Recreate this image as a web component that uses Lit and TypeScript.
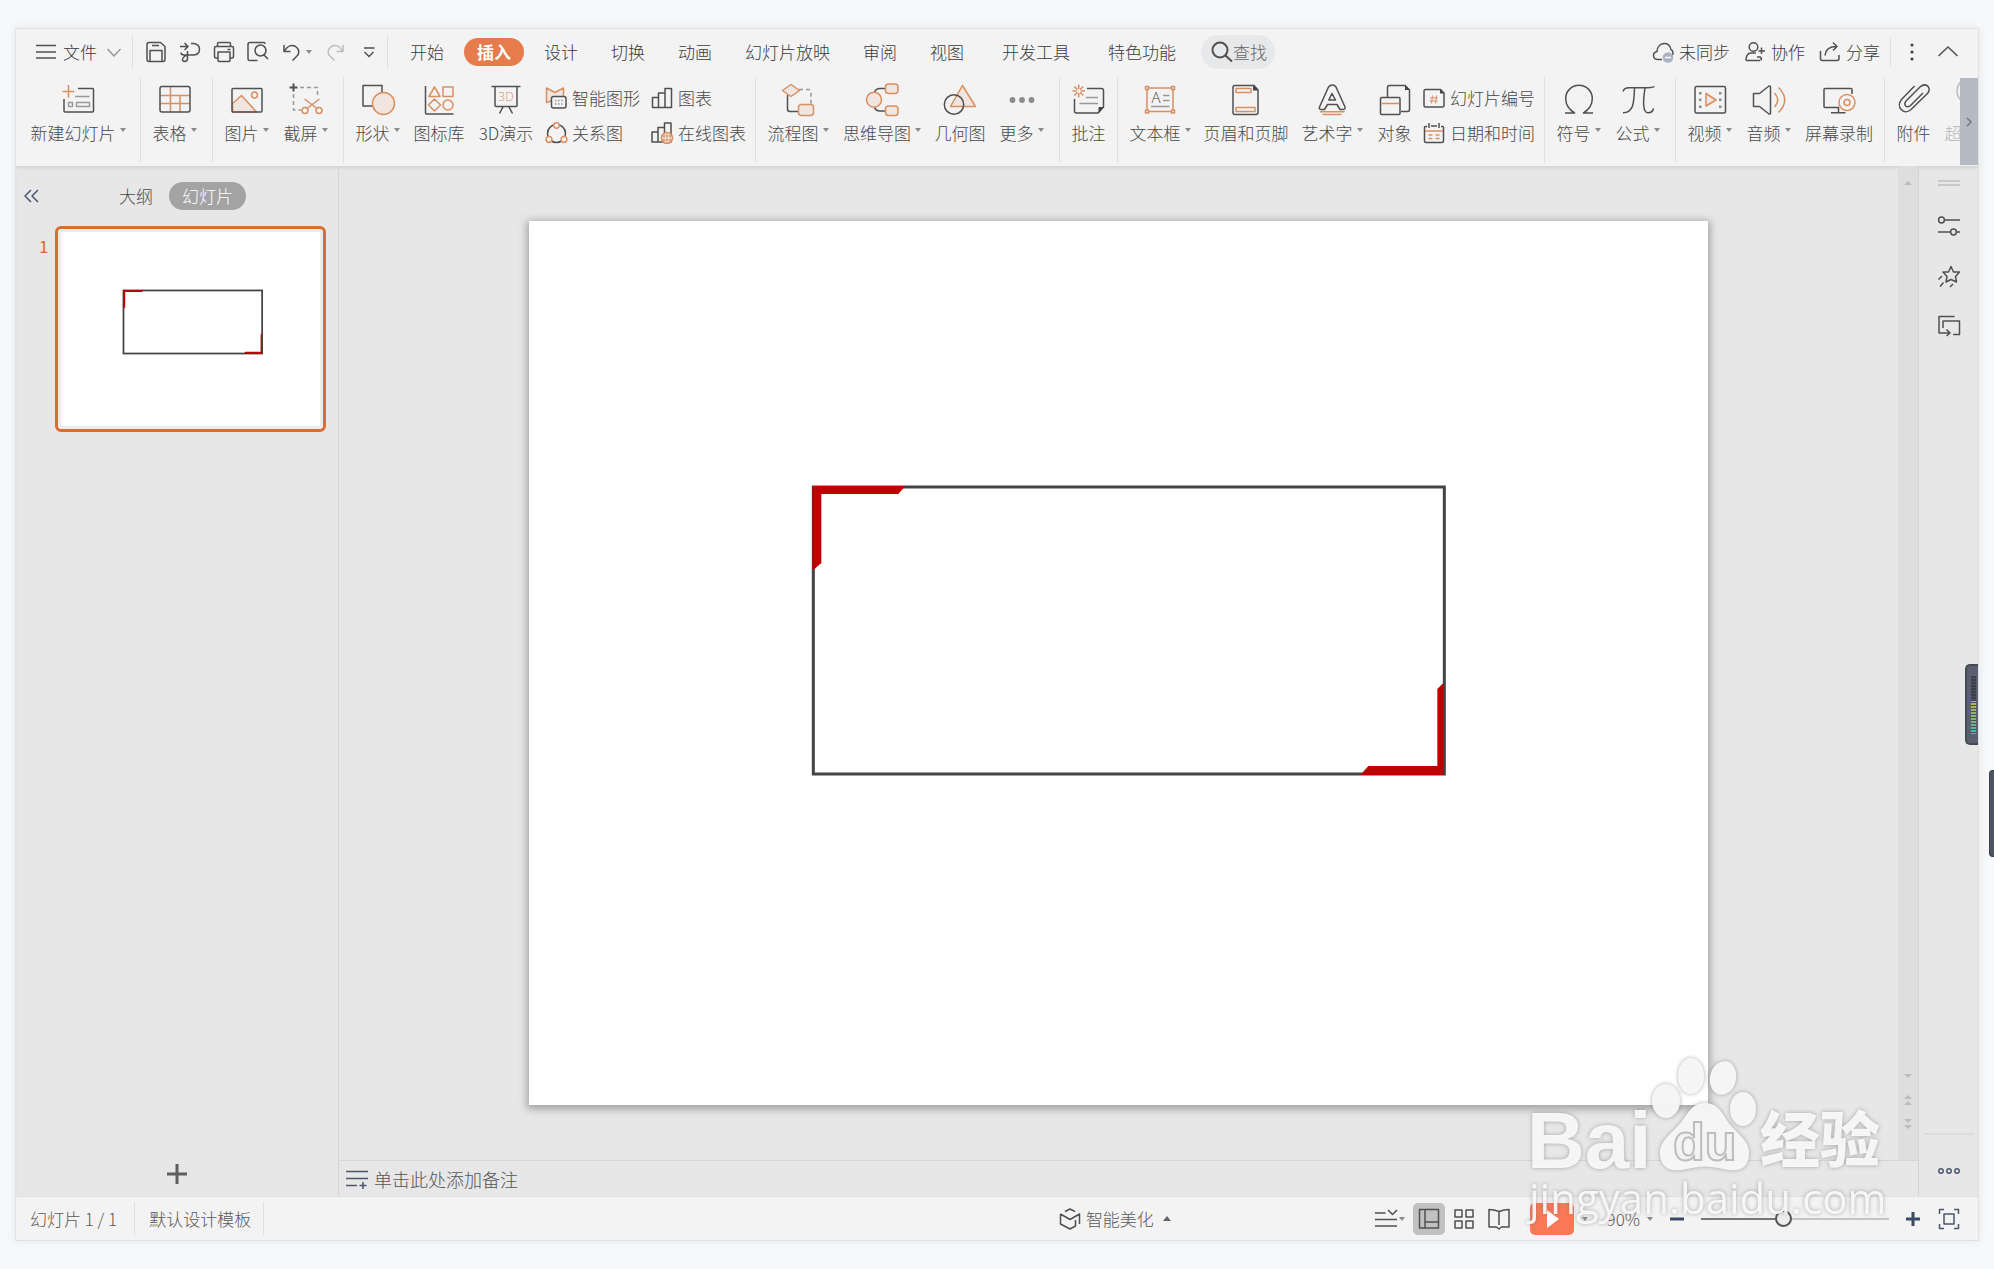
import { LitElement, html, svg, css, type TemplateResult, type SVGTemplateResult } from "lit";
import { customElement, property } from "lit/decorators.js";

/* ---------- icon artwork ---------- */

const big: Record<string, SVGTemplateResult> = {
  newSlide: svg`<path class="d" d="M17 5.5H31.5Q32.5 5.5 32.5 6.5V28Q32.5 29 31.5 29H4Q3 29 3 28V16"/><path class="o" d="M7.5 2V14.5M1.5 8.5H13.5"/><path class="g" d="M14 13.5H28.5M7.5 19.5H11.5V23.5H7.5ZM15.5 19.5H28.5V23.5H15.5Z"/>`,
  table: svg`<path class="o" d="M12.5 4V29M22 12.5V29M2.5 12.5H31.5M2.5 20.5H31.5"/><rect class="d" x="2" y="3.5" width="30" height="25.5" rx="2"/>`,
  image: svg`<path class="of" d="M2.5 20.5L11.5 12.5L26.5 29H2.5Z"/><circle class="o" cx="24.5" cy="12" r="3"/><rect class="d" x="2" y="5.5" width="30" height="23.5" rx="1"/>`,
  capture: svg`<path class="d b" d="M4.5 .5V8.5M.5 4.5H8.5"/><path class="g" stroke-dasharray="4 3" d="M11 4.5H28.5V15M4.5 11V27H12"/><circle class="o" cx="16" cy="27.5" r="3"/><circle class="o" cx="30" cy="27.5" r="3"/><path class="o" d="M15.5 16L28 25.5M30.5 16L18 25.5"/>`,
  shape: svg`<rect class="d" x="2" y="2.5" width="19" height="20.5"/><circle class="of" cx="22.5" cy="20.5" r="11"/>`,
  library: svg`<path class="d" d="M3.5 3V30Q3.5 31 4.5 31H31.5"/><path class="o" d="M12.5 4L7 13.5H18ZM21 4H31V13.5H21ZM12.5 16L18.5 22L12.5 28L6.5 22Z"/><circle class="o" cx="26" cy="22" r="5"/>`,
  show3d: svg`<path class="d" d="M2.5 3.5H31.5M6 3.5V22.5Q6 23.5 7 23.5H27Q28 23.5 28 22.5V3.5M14 24L10.500 30.500M20 24L23.500 30.500"/><text class="ot" x="17" y="18" text-anchor="middle" font-size="12">3D</text>`,
  flow: svg`<path class="d" d="M6.500 12V26Q6.500 28.500 9 28.500H17"/><path class="g" stroke-dasharray="4 3" d="M18 6.500H28Q30 6.500 30 8.500V21"/><path class="of" d="M10 1.500L18.500 7.500L10 13.500L1.500 7.500Z"/><rect class="of" x="17.500" y="21.500" width="15" height="11" rx="3"/>`,
  mind: svg`<path class="d" d="M9.500 9.500Q10.500 5.500 15 5.500H21M9.500 24Q10.500 28 15 28H21"/><circle class="of" cx="9" cy="16.700" r="7.500"/><rect class="of" x="20.500" y="1" width="12.500" height="9.500" rx="3"/><rect class="of" x="20.500" y="23" width="12.500" height="9.500" rx="3"/>`,
  geo: svg`<path class="of" d="M19.500 2.500L7.500 23.500H32.500Z"/><circle class="d" cx="11" cy="21.500" r="9.700"/>`,
  more: svg`<circle class="gd" cx="7.500" cy="17" r="2.900"/><circle class="gd" cx="17" cy="17" r="2.900"/><circle class="gd" cx="26.500" cy="17" r="2.900"/>`,
  note: svg`<path class="d" d="M15 5.500H29.500Q31.500 5.500 31.500 7.500V24L26 30H4.500Q2.500 30 2.500 28V16"/><path class="k" d="M32 24H27.500Q26.500 24 26.500 25V30.500Z"/><path class="o" d="M6.700 1.500V6M6.700 10V14.500M.5 8H4.700M8.700 8H13M2.300 3.500L5.500 6.700M8 9.300L11.200 12.500M11.200 3.500L8 6.700M5.500 9.300L2.300 12.500"/><path class="g" d="M14 14.500H26M7.500 20.500H26"/>`,
  textbox: svg`<rect class="o" x="4" y="5" width="26" height="23.500"/><path class="ow" d="M2.500 3.500H5.500V6.500H2.500ZM28.500 3.500H31.500V6.500H28.500ZM2.500 27H5.500V30H2.500ZM28.500 27H31.500V30H28.500Z"/><text class="dt" x="13" y="20" text-anchor="middle" font-size="15">A</text><path class="g" d="M20 12.500H26.500M20 17.500H26.500M8 23.500H26.500"/>`,
  header: svg`<path class="d" d="M25 2.500H6Q4 2.500 4 4.500V29.500Q4 31.500 6 31.500H27Q29 31.500 29 29.500V7Z"/><path class="k" d="M24 2L29.500 7.500H24Z"/><rect class="o" x="7" y="5.500" width="15" height="4"/><rect class="o" x="7" y="24.500" width="19" height="4"/>`,
  art: svg`<path class="d" d="M13.500 4Q15 2 17.500 2H17.500Q19.500 2 21 4L30 24Q30.500 26.500 28 26.500H25L22 21.500H12.500L9.500 26.500H6.500Q3.500 26.500 4.500 24ZM17 10.500L13.800 17H20.500Z"/><path class="o" d="M5 28.700H29.500M7.500 31.500H26.500"/>`,
  object: svg`<path class="d" d="M9.500 14V4.500Q9.500 2.500 11.500 2.500H27L31.500 7V26.500Q31.500 28.500 29.500 28.500H23"/><path class="k" d="M27 2L32 7H27Z"/><rect class="d" x="2.500" y="14.500" width="19.500" height="17" rx="1"/><path class="o" d="M3.500 20.500H21"/>`,
  omega: svg`<path class="d" d="M3 30H12.500C7 26.500 3.700 22 3.700 15.500A13.300 13.300 0 0 1 30.300 15.500C30.300 22 27 26.500 21.500 30H31"/>`,
  pi: svg`<path class="d" d="M2 8.500C3 5.500 5 4.800 8 4.800H27C30 4.800 32 4.600 33.500 3.500M13.500 5C13 20 12.500 29.500 2 29.800M24 5C22 18 21.500 29.800 27 29.800C30 29.800 32 28 32.500 25.500"/>`,
  video: svg`<rect class="d" x="2" y="3.500" width="30.500" height="26.500" rx="1.500"/><path class="of" d="M13 10.500L23 17L13 23Z"/><path class="gd" d="M6 9H8.500V11.500H6ZM6 15.500H8.500V18H6ZM6 22.500H8.500V25H6ZM26 9H28.500V11.500H26ZM26 15.500H28.500V18H26ZM26 22.500H28.500V25H26Z"/>`,
  audio: svg`<path class="d" d="M1.500 10.500H7.500L17 3Q18.500 2.500 18.500 4V30Q18.500 31.500 17 31L7.500 23.500H1.500Z"/><path class="o" d="M22.500 10Q29 17 22.500 24M26.500 4.500Q39 17 26.500 29.500"/>`,
  record: svg`<path class="d" d="M30 11V6.500Q30 5.500 29 5.500H3Q2 5.500 2 6.500V23.500Q2 24.500 3 24.500H17M9 29.700H23.500M16.500 24.500V29.500"/><circle class="ow" cx="25" cy="19.500" r="8"/><circle class="o" cx="25" cy="19.500" r="3"/>`,
  clip: svg`<path class="d" d="M17.500 3L4.500 16.500C-1.500 23.500 6.500 33 14 26.500L30.500 10.500C35.500 4.500 28.500 -1 23 4L9.500 17.500C5.500 22 10 26 13.500 22.500L26 10"/>`,
  link: svg`<circle class="f" cx="17" cy="8" r="13"/>`,
};

const small: Record<string, SVGTemplateResult> = {
  smart: svg`<path class="of" d="M1.500 1L10 5.500L18.500 1V14H6L1.500 15.500Z"/><rect class="dw" x="6.500" y="9.500" width="14.500" height="11.500" rx="2"/><path class="g" stroke-dasharray="1.500 1.500" d="M10 13.500H17.500M10 17H17.500"/>`,
  relation: svg`<circle class="d" cx="11.500" cy="11.500" r="9"/><circle class="ow" cx="11.500" cy="3.500" r="2.700"/><circle class="ow" cx="4" cy="17.500" r="2.900"/><circle class="ow" cx="19" cy="17.500" r="2.900"/>`,
  chart: svg`<path class="d" d="M1.500 20.500V10.500H7.500V20.500ZM7.500 20.500V6H14V20.500ZM14 20.500V1.500H20.500V20.500Z"/>`,
  online: svg`<path class="d" d="M1 20V10H7V20ZM7 20V5.500H13.500V20ZM13.500 20V1H20V20Z"/><circle class="ow" cx="16" cy="16" r="5.500"/><path class="o thin" d="M16 10.500V21.500M10.500 14H21.500M10.500 18H21.500M13 11.500V20.500M19 11.500V20.500"/>`,
  slideNo: svg`<path class="d" d="M17.500 2.500H2.500Q1 2.500 1 4V18.500Q1 20 2.500 20H19.500Q21 20 21 18.500V6Z"/><path class="k" d="M17 2L21.500 6.500H17Z"/><path class="o thin" d="M9.500 8.500L8.500 16.500M13.500 8.500L12.500 16.500M7 11H15M6.500 14H14.500"/>`,
  date: svg`<path class="d" d="M4 4.500H2.500Q1.500 4.500 1.500 5.500V19Q1.500 20.500 3 20.500H19Q20.500 20.500 20.500 19V5.500Q20.500 4.500 19.500 4.500H18M8 4H14M6 1V6M16 1V6"/><path class="o" d="M2 9H20M5.500 13H9.500M12.500 13H16.500M5.500 16.500H9.500M12.500 16.500H16.500"/>`,
  menu: svg`<path class="d" d="M1 4.500H21M1 11H21M1 17H21"/>`,
  save: svg`<path class="d" d="M2 3.500Q2 1.500 4 1.500H15.500L20 5.500V18.500Q20 20.500 18 20.500H4Q2 20.500 2 18.500ZM5 20V9.500H17V20M7 4.500H14"/>`,
  exportPdf: svg`<path class="d" d="M1 5.500H8.500M5.500 2L9 5.500L5.500 9M12 2.500H14.500Q20.500 3 20.500 8.500Q20.500 13.500 14.500 14H5Q2 14 2 11.500M8.500 10V17.500Q8.500 20.500 5.500 20.500Q2.500 20 4 17Q5 15 8.500 14"/>`,
  print: svg`<path class="d" d="M4.500 5V3Q4.500 1.500 6 1.500H16Q17.500 1.500 17.500 3V5M5 17H3Q1.500 17 1.500 15.500V7Q1.500 5.500 3 5.500H19Q20.500 5.500 20.500 7V15.500Q20.500 17 19 17H17M5 11H17V19.500Q17 20.500 16 20.500H6Q5 20.500 5 19.500ZM14.500 8.500H17.500"/>`,
  preview: svg`<path class="d" d="M10.500 19.500H3Q1 19.500 1 17.500V3.500Q1 1.500 3 1.500H17Q18 1.500 18 3M16.500 13.500L21 18"/><circle class="d" cx="13.500" cy="9.500" r="5.500"/>`,
  undo: svg`<path class="d" d="M3 4V10.500H9.500M3.500 10C6 5.500 10 3 14.500 5.500C19 8.500 18.500 13 15.500 15.500L11.500 19.500"/>`,
  redo: svg`<path class="f" d="M19 4V10.500H12.500M18.500 10C16 5.500 12 3 7.500 5.500C3 8.500 3.500 13 6.500 15.500L10.500 19.500"/>`,
  customize: svg`<path class="d" d="M6 7H16.500M6.500 11L11 15.500L15.500 11"/>`,
  search: svg`<circle class="d b" cx="9" cy="9" r="7.500"/><path class="d b" d="M14.500 14.500L21 20.500"/>`,
  cloud: svg`<path class="d" d="M10 18.500H5.500C.5 18 0 11.500 5 10.500C5.500 .5 18 0 19 8.500C21 9.500 21.500 12 20.500 14"/><circle cx="16" cy="16.500" r="5.300" fill="#a9b3c3"/><path d="M13 16.500H19" stroke="#fff" stroke-width="1.500"/>`,
  collab: svg`<circle class="d" cx="9.500" cy="6" r="4.300"/><path class="d" d="M16 19.500H3Q1.500 19.500 2 17.500Q3 12.500 6.500 12H12M13 16H16Q18 17 17 19.500M17.500 6.500V13M14.500 10H21"/>`,
  share: svg`<path class="d" d="M1.500 10V17.500Q1.500 19.500 3.500 19.500H18Q20 19.500 20 17.500V14M6 14.500C6.500 8 10 5.500 17.500 5.500M14 1.500L18 5.500L14 9.500"/>`,
  dots: svg`<circle class="k" cx="11" cy="4" r="1.600"/><circle class="k" cx="11" cy="11" r="1.600"/><circle class="k" cx="11" cy="18" r="1.600"/>`,
  up: svg`<path class="d" d="M1.500 15L11 6L20.500 15"/>`,
  down: svg`<path class="g" d="M4.500 8L11 15L17.500 8"/>`,
  collapse: svg`<path class="n" d="M9 5L3 11L9 17M16 5L10 11L16 17"/>`,
  plus: svg`<path class="gb" d="M11 1V21M1 11H21"/>`,
  notes: svg`<path class="n" d="M0 3.500H22M0 10.500H22M0 17.500H11M13.500 17.500H20.500M17 14V21"/>`,
  beautify: svg`<path class="d" d="M6 3.500L11 1L16 3.500M1.500 6V16L11 21L16.500 18V12M1.500 6L11 11.500L20.500 6V16"/>`,
  list: svg`<path class="d" d="M0 5H10.500M0 11.500H22M0 18H22M13 2L17.500 6.500L22 2"/>`,
  normal: svg`<path class="d" d="M1.500 1.500H20.500V20H1.500ZM7 1.500V20M7 14H20.500"/>`,
  grid: svg`<path class="d" d="M2 2H9V9H2ZM13 2H20V9H13ZM2 13H9V20H2ZM13 13H20V20H13Z"/>`,
  book: svg`<path class="d" d="M11 3.500Q6 1.500 1 1.500V19H8.500L11 21L13.500 19H21V1.500Q16 1.500 11 3.500V17"/>`,
  fit: svg`<path class="n" d="M1.500 6V1.500H6M16 1.500H20.500V6M20.500 16V20.500H16M6 20.500H1.500V16M6 6H16V16H6Z"/>`,
  minus: svg`<path class="nb" d="M4 11H18"/>`,
  add: svg`<path class="nb" d="M4 11H18M11 4V18"/>`,
  settings: svg`<path class="d" d="M7 5H22M0 17H12.500M18.500 17H22"/><circle class="d" cx="3.500" cy="5" r="2.900"/><circle class="d" cx="15.500" cy="17" r="2.900"/>`,
  star: svg`<path class="d" d="M13 1.500L15.500 7H21.500L17.500 11.500L18.500 17L13 14.500L8 17L9 11.500L5 7H10.500ZM4 11L.5 14.500M5.500 17.500L2 21.500M15 19L12 22"/>`,
  windows: svg`<path class="d" d="M16.500 1.500H1V18H11M8.500 14.500L12 18L8.500 21M5 13V6H21.500V19.500H15"/>`,
  ooo: svg`<circle class="n" cx="3" cy="11" r="2.200"/><circle class="n" cx="11" cy="11" r="2.200"/><circle class="n" cx="19" cy="11" r="2.200"/>`,
  play: svg`<path d="M6 2L18 11L6 20Z" fill="#fff"/>`,
};

const iconStyles = css`
  svg { display: block; flex: none; overflow: visible; }
  .d, .dw, .g, .o, .of, .ow, .f, .n, .nb, .gb { fill: none; stroke-width: 1.5; stroke-linejoin: round; }
  .d, .dw { stroke: #505050; }
  .dw, .ow { fill: #f3f3f3; }
  .b { stroke-width: 2; }
  .thin { stroke-width: 1; }
  .g { stroke: #999; }
  .gd { fill: #8c8c8c; }
  .gb { stroke: #5e5e5e; stroke-width: 3; }
  .k { fill: #444; }
  .o, .of, .ow { stroke: #d88f62; }
  .of { fill: #f1e6df; }
  .f { stroke: #bdbdbd; }
  .n { stroke: #4b566e; }
  .nb { stroke: #3c4963; stroke-width: 3; }
  .ot { fill: #d88f62; font-family: "Open Sans", sans-serif; }
  .dt { fill: #444; font-family: "Open Sans", sans-serif; }
`;

const ic = (name: string): TemplateResult =>
  html`<svg width="22" height="22" viewBox="0 0 22 22" aria-hidden="true">${small[name]}</svg>`;
const caret = html`<svg class="caret" width="6" height="4" viewBox="0 0 6 4" aria-hidden="true"><path d="M0 0H6L3 4Z" fill="#8a8a8a"/></svg>`;

const baseStyles = css`
  * { box-sizing: border-box; }
  button, input {
    margin: 0; padding: 0; border: 0; background: none; color: inherit;
    font: inherit; white-space: nowrap;
  }
`;

/* ---------- slide artwork, shared by canvas and thumbnail ---------- */

@customElement("slide-art")
export class SlideArt extends LitElement {
  @property({ type: Number }) line = 3;
  static styles = css`
    :host { display: block; background: #fff; aspect-ratio: 4 / 3; }
    svg { display: block; width: 100%; height: 100%; }
  `;
  render() {
    return html`<svg viewBox="0 0 1178 884" role="img" aria-label="1">
      <rect x="284" y="266" width="631" height="287" fill="none" stroke="#444" stroke-width=${this.line} />
      <path d="M283 265H376L369 273H292V342L284 349H283Z" fill="#c00000" />
      <path d="M914 462V554H831L839 545H908V468Z" fill="#c00000" />
    </svg>`;
  }
}

/* ---------- top bar ---------- */

@customElement("menu-bar")
export class MenuBar extends LitElement {
  static styles = [baseStyles, iconStyles, css`
    :host { display: flex; align-items: center; height: 48px; padding: 0 19px 2px 19px; color: #3a3a3a; }
    button { display: flex; align-items: center; }
    .file { gap: 6px; }
    .sep { flex: none; width: 1px; height: 32px; background: #dedede; margin: 0 12px 0 7px; }
    .sep.end { margin-right: 9px; }
    .quick { display: flex; align-items: center; gap: 12px; }
    .quick button { gap: 3px; }
    .tabs { display: flex; gap: 7px; }
    .tab { height: 28px; padding: 0 13px; border-radius: 14px; }
    .tab.wide { margin-left: 5px; }
    .tab.on { background: #e67c4b; color: #fff; font-weight: 700; }
    .search {
      display: flex; align-items: center; height: 34px; margin-left: 12px; padding: 0 6px 0 10px;
      border-radius: 17px; background: #e7e8ea;
    }
    .search input { width: 36px; outline: 0; }
    .search input::placeholder { color: #666; opacity: 1; }
    .right { display: flex; align-items: center; margin-left: auto; gap: 14px; }
    .right button { gap: 5px; }
    .right .sep { margin: 0 -4px; height: 28px; }
  `];
  private tabs: [string, boolean][] = [
    ["开始", false], ["插入", false], ["设计", false], ["切换", false], ["动画", false],
    ["幻灯片放映", false], ["审阅", false], ["视图", false], ["开发工具", true], ["特色功能", true],
  ];
  render() {
    return html`
      <button class="file">${ic("menu")}<span>文件</span>${ic("down")}</button>
      <span class="sep"></span>
      <div class="quick">
        <button aria-label="保存">${ic("save")}</button>
        <button aria-label="输出为PDF">${ic("exportPdf")}</button>
        <button aria-label="打印">${ic("print")}</button>
        <button aria-label="打印预览">${ic("preview")}</button>
        <button aria-label="撤销">${ic("undo")}${caret}</button>
        <button aria-label="恢复">${ic("redo")}</button>
        <button aria-label="自定义">${ic("customize")}</button>
      </div>
      <span class="sep end"></span>
      <nav class="tabs">
        ${this.tabs.map(([t, wide]) => html`<button class="tab ${wide ? "wide" : ""} ${t === "插入" ? "on" : ""}">${t}</button>`)}
      </nav>
      <label class="search">${ic("search")}<input type="text" placeholder="查找" aria-label="查找" /></label>
      <div class="right">
        <button>${ic("cloud")}未同步</button>
        <button>${ic("collab")}协作</button>
        <button>${ic("share")}分享</button>
        <span class="sep"></span>
        <button aria-label="更多">${ic("dots")}</button>
        <button aria-label="收起功能区">${ic("up")}</button>
      </div>`;
  }
}

/* ---------- ribbon ---------- */

type Item = { icon: string; label: string; w: string; drop?: boolean; faded?: boolean };
type Group = { items: Item[]; stacks?: [string, string][][]; tight?: boolean };

const groups: Group[] = [
  { items: [{ icon: "newSlide", label: "新建幻灯片", w: "w5c", drop: true }] },
  { items: [{ icon: "table", label: "表格", w: "w2c", drop: true }] },
  { items: [{ icon: "image", label: "图片", w: "w2c", drop: true }, { icon: "capture", label: "截屏", w: "w2c", drop: true }] },
  {
    items: [
      { icon: "shape", label: "形状", w: "w2c", drop: true },
      { icon: "library", label: "图标库", w: "w3" },
      { icon: "show3d", label: "3D演示", w: "w3d" },
    ],
    stacks: [[["smart", "智能图形"], ["relation", "关系图"]], [["chart", "图表"], ["online", "在线图表"]]],
  },
  {
    items: [
      { icon: "flow", label: "流程图", w: "w3c", drop: true },
      { icon: "mind", label: "思维导图", w: "w4c", drop: true },
      { icon: "geo", label: "几何图", w: "w3" },
      { icon: "more", label: "更多", w: "w2c", drop: true },
    ],
  },
  { items: [{ icon: "note", label: "批注", w: "w2" }], tight: true },
  {
    items: [
      { icon: "textbox", label: "文本框", w: "w3c", drop: true },
      { icon: "header", label: "页眉和页脚", w: "w5" },
      { icon: "art", label: "艺术字", w: "w3c", drop: true },
      { icon: "object", label: "对象", w: "w2" },
    ],
    stacks: [[["slideNo", "幻灯片编号"], ["date", "日期和时间"]]],
  },
  { items: [{ icon: "omega", label: "符号", w: "w2c", drop: true }, { icon: "pi", label: "公式", w: "w2c", drop: true }] },
  {
    items: [
      { icon: "video", label: "视频", w: "w2c", drop: true },
      { icon: "audio", label: "音频", w: "w2c", drop: true },
      { icon: "record", label: "屏幕录制", w: "w4" },
    ],
    tight: true,
  },
  { items: [{ icon: "clip", label: "附件", w: "w2" }, { icon: "link", label: "超链接", w: "w3", faded: true }] },
];

@customElement("tool-ribbon")
export class ToolRibbon extends LitElement {
  static styles = [baseStyles, iconStyles, css`
    :host { display: flex; height: 89px; color: #484848; }
    .strip { display: flex; flex: 1; min-width: 0; overflow: hidden; padding-left: 4px; }
    .group { display: flex; flex: none; height: 86px; padding: 0 8px 0 4px; border-right: 1px solid #e0e0e0; }
    .group.tight { padding-right: 4px; }
    .group.stacked { padding-right: 9px; }
    .item { display: flex; flex: none; flex-direction: column; align-items: center; gap: 4px; padding-top: 6px; }
    .w2 { width: 49px; } .w2c { width: 59px; } .w3 { width: 64px; } .w3d { width: 70px; }
    .w3c { width: 76px; } .w4 { width: 82px; } .w4c { width: 92px; } .w5 { width: 96px; } .w5c { width: 108px; }
    .name { display: flex; align-items: center; gap: 4px; line-height: 24px; }
    .caret { margin-top: -6px; }
    .faded { color: #b8b8b8; }
    .stack { display: flex; flex-direction: column; gap: 11px; padding: 9px 0 0 4px; }
    .stack + .stack { padding-left: 11px; }
    .row { display: flex; align-items: center; gap: 5px; height: 24px; }
    .next { flex: none; width: 18px; margin: 1px 0; background: #b5b9c2; display: grid; place-items: center; }
  `];
  render() {
    return html`
      <div class="strip">
        ${groups.map((g) => html`<div class="group ${g.tight ? "tight" : ""} ${g.stacks ? "stacked" : ""}">
          ${g.items.map((i) => html`<button class="item ${i.w} ${i.faded ? "faded" : ""}">
            <svg width="34" height="34" viewBox="0 0 34 34" aria-hidden="true">${big[i.icon]}</svg>
            <span class="name">${i.label}${i.drop ? caret : null}</span>
          </button>`)}
          ${(g.stacks ?? []).map((s) => html`<div class="stack">
            ${s.map(([icon, label]) => html`<button class="row">${ic(icon)}${label}</button>`)}
          </div>`)}
        </div>`)}
      </div>
      <button class="next" aria-label="向右滚动"><svg width="6" height="8" viewBox="0 0 6 8"><path d="M1 0L5 4L1 8" fill="none" stroke="#747985" stroke-width="1.500"/></svg></button>`;
  }
}

/* ---------- outline / thumbnails ---------- */

@customElement("slide-panel")
export class SlidePanel extends LitElement {
  static styles = [baseStyles, iconStyles, css`
    :host { display: flex; flex-direction: column; border-right: 1px solid #d6d6d6; color: #4a4a4a; }
    .head { display: flex; align-items: center; height: 28px; margin-top: 16px; padding-left: 6px; }
    .head .modes { display: flex; margin-left: 62px; gap: 3px; }
    .mode { height: 28px; padding: 0 13px; border-radius: 14px; }
    .mode.on { background: #a3a3a3; color: #fff; }
    .thumb { display: flex; gap: 8px; padding: 16px 12px 0 23px; }
    .no { width: 8px; padding-top: 8px; color: #d9692c; font-weight: 400; line-height: 24px; }
    .frame { flex: 1; display: block; padding: 3px; border: 3px solid #d86e33; border-radius: 6px; background: #ececec; }
    .add { margin: auto auto 11px; }
  `];
  render() {
    return html`
      <div class="head">
        <button aria-label="折叠">${ic("collapse")}</button>
        <div class="modes"><button class="mode">大纲</button><button class="mode on">幻灯片</button></div>
      </div>
      <div class="thumb">
        <span class="no">1</span>
        <button class="frame" aria-label="幻灯片 1"><slide-art .line=${8}></slide-art></button>
      </div>
      <button class="add" aria-label="新建幻灯片">${ic("plus")}</button>`;
  }
}

/* ---------- editing area ---------- */

const tri = (d: string) => html`<svg width="10" height="12" viewBox="0 0 10 12" aria-hidden="true"><path d=${d} fill="#bcbcbc"/></svg>`;

@customElement("slide-canvas")
export class SlideCanvas extends LitElement {
  static styles = [baseStyles, iconStyles, css`
    :host { display: flex; flex-direction: column; min-width: 0; border-right: 1px solid #d2d2d2; }
    .work { display: flex; flex: 1; min-height: 0; border-bottom: 1px solid #d6d6d6; }
    .stage { flex: 1; min-width: 0; display: flex; justify-content: center; padding: 55px 0; }
    slide-art { height: 100%; box-shadow: 0 2px 8px 2px #a0a0a0; }
    .bar { width: 20px; display: flex; flex-direction: column; align-items: center; gap: 12px; padding: 11px 0 30px; background: #dedede; }
    .bar .first { margin-bottom: auto; }
    .bar button { display: block; }
    .notes { display: flex; align-items: center; gap: 6px; height: 35px; padding: 0 7px; font-size: 18px; color: #555; }
    .notes input { flex: 1; height: 24px; outline: 0; }
    .notes input::placeholder { color: #555; opacity: 1; }
  `];
  render() {
    return html`
      <div class="work">
        <div class="stage"><slide-art></slide-art></div>
        <div class="bar">
          <button class="first" aria-label="向上">${tri("M1 8L5 4L9 8Z")}</button>
          <button aria-label="向下">${tri("M1 4L5 8L9 4Z")}</button>
          <button aria-label="上一张">${tri("M1 5L5 1L9 5ZM1 11L5 7L9 11Z")}</button>
          <button aria-label="下一张">${tri("M1 1L5 5L9 1ZM1 7L5 11L9 7Z")}</button>
        </div>
      </div>
      <label class="notes">${ic("notes")}<input type="text" placeholder="单击此处添加备注" aria-label="备注" /></label>`;
  }
}

/* ---------- task pane strip ---------- */

@customElement("side-strip")
export class SideStrip extends LitElement {
  static styles = [baseStyles, iconStyles, css`
    :host { display: flex; flex-direction: column; align-items: center; padding: 14px 4px; }
    .grip { width: 22px; height: 6px; border: solid #c9c9c9; border-width: 2px 0; margin-bottom: 29px; }
    button { display: block; margin-bottom: 28px; }
    .more { margin: auto 0 0; width: 100%; border-top: 2px solid #dcdcdc; padding-top: 25px; display: grid; justify-items: center; }
  `];
  render() {
    return html`
      <span class="grip"></span>
      <button aria-label="属性">${ic("settings")}</button>
      <button aria-label="动画">${ic("star")}</button>
      <button aria-label="切换">${ic("windows")}</button>
      <button class="more" aria-label="更多">${ic("ooo")}</button>`;
  }
}

/* ---------- status bar ---------- */

@customElement("status-bar")
export class StatusBar extends LitElement {
  static styles = [baseStyles, iconStyles, css`
    :host { display: flex; align-items: center; height: 44px; padding: 0 18px 0 0; color: #5a5a5a; border-top: 1px solid #e0e0e0; background: #f3f3f3; }
    .cell { display: flex; align-items: center; height: 33px; padding: 0 17px 0 14px; border-right: 1px solid #dedede; }
    .cell + .cell { padding-right: 12px; }
    .near { flex: 4; } .far { flex: 1; }
    .row, .row button { display: flex; align-items: center; }
    .smart { gap: 5px; }
    .smart svg + svg { margin-left: 4px; }
    .views { gap: 3px; }
    .view { height: 32px; padding: 0 5px; border-radius: 5px; gap: 2px; }
    .view.on { background: #c1c1c1; }
    .run { height: 32px; padding: 0 11px; margin: 0 8px 0 15px; border-radius: 5px; background: #fb7857; }
    .pct { margin-left: 19px; gap: 7px; }
    .zoom { margin-left: 13px; gap: 13px; }
    input {
      appearance: none; width: 188px; height: 17px; outline: 0;
      background: linear-gradient(90deg, #777 43%, #c4c4c4 43%) center / 100% 2px no-repeat;
    }
    input::-webkit-slider-thumb { appearance: none; width: 17px; height: 17px; border: 2px solid #555; border-radius: 50%; background: #eee; }
    .zoom .fit { margin-left: 1px; }
  `];
  render() {
    return html`
      <span class="cell">幻灯片 1 / 1</span><span class="cell">默认设计模板</span>
      <span class="near"></span>
      <div class="row"><button class="smart">${ic("beautify")}智能美化<svg width="8" height="5" viewBox="0 0 8 5"><path d="M0 5H8L4 0Z" fill="#666"/></svg></button></div>
      <span class="far"></span>
      <div class="row views">
        <button class="view" aria-label="备注">${ic("list")}${caret}</button>
        <button class="view on" aria-label="普通视图">${ic("normal")}</button>
        <button class="view" aria-label="幻灯片浏览">${ic("grid")}</button>
        <button class="view" aria-label="阅读视图">${ic("book")}</button>
      </div>
      <div class="row">
        <button class="run" aria-label="放映">${ic("play")}</button>
        <button aria-label="放映选项">${caret}</button>
        <button class="pct">90%${caret}</button>
      </div>
      <div class="row zoom">
        <button aria-label="缩小">${ic("minus")}</button>
        <input type="range" min="0" max="100" .value=${"43"} aria-label="缩放" />
        <button aria-label="放大">${ic("add")}</button>
        <button class="fit" aria-label="最佳显示比例">${ic("fit")}</button>
      </div>`;
  }
}

/* ---------- watermark ---------- */

@customElement("water-mark")
export class WaterMark extends LitElement {
  static styles = css`
    :host { display: block; width: 364px; pointer-events: none; }
    svg { display: block; width: 100%; overflow: visible; filter: drop-shadow(0 0 2px rgba(110, 110, 110, 0.6)); }
    .w { fill: #f9f9f9; fill-opacity: 0.95; }
    .lat { font-family: "Liberation Sans", sans-serif; font-weight: 700; }
    .han { font-family: "Noto Sans CJK SC", sans-serif; font-weight: 900; }
    .url { font-family: "Open Sans", sans-serif; font-weight: 400; }
    .du { fill: #f3f3f3; stroke: #bdbdbd; stroke-width: 2; }
  `;
  render() {
    return html`<svg viewBox="0 0 364 174" role="img" aria-label="Baidu 经验">
      <text class="w lat" x="2" y="116" font-size="80">Bai</text>
      <ellipse class="w" cx="141" cy="49" rx="14" ry="17"/>
      <ellipse class="w" cx="166" cy="24" rx="13" ry="18"/>
      <ellipse class="w" cx="198" cy="26" rx="13" ry="17" transform="rotate(12 198 26)"/>
      <ellipse class="w" cx="218" cy="57" rx="13" ry="17"/>
      <path class="w" d="M180 51C164 51 162 66 151 76C141 86 134 92 135 103C137 122 154 119 167 116Q180 113 193 116C206 119 223 122 224 103C225 92 218 86 208 76C198 66 196 51 180 51Z"/>
      <text class="du lat" x="148" y="108" font-size="52">du</text>
      <text class="w han" x="235" y="110" font-size="60">经验</text>
      <text class="w url" x="4" y="162" font-size="42">jingyan.baidu.com</text>
    </svg>`;
  }
}

/* ---------- root ---------- */

@customElement("app-root")
export class AppRoot extends LitElement {
  static styles = [baseStyles, css`
    :host {
      display: flex; position: relative; box-sizing: border-box; height: 100vh; overflow: hidden;
      padding: 28px 15px; background: #f6f8fa;
      font: 300 17px/24px "Noto Sans CJK SC", sans-serif;
    }
    .window {
      position: relative; flex: 1; min-width: 0; display: flex; flex-direction: column;
      border: 1px solid #e2e2e2; background: #f3f3f3; box-shadow: 0 0 9px rgba(0, 0, 0, 0.08);
    }
    .body {
      flex: 1; min-height: 0; display: grid; grid-template-columns: 323px minmax(0, 1fr) 59px;
      background: #e7e7e7; box-shadow: inset 0 3px 3px -1px #d2d2d2;
    }
    .meter {
      position: absolute; right: 0; top: 635px; width: 13px; height: 81px; padding: 10px 2px 9px 4px;
      border: 2px solid #454954; border-right: 0; border-radius: 5px 0 0 5px; background: #5a6070;
    }
    .levels {
      display: block; height: 100%;
      background:
        repeating-linear-gradient(transparent 0 2px, #4a4f5b 2px 3px),
        linear-gradient(#3c404b 43%, #c0b848 43%, #8fb46a 65%, #4bb5ac);
    }
    .tab { position: absolute; right: 0; top: 770px; width: 5px; height: 87px; border: 1px solid #3a3f49; border-right: 0; border-radius: 4px 0 0 4px; background: #4c5564; }
    water-mark { position: absolute; right: 89px; bottom: 14px; }
  `];
  render() {
    return html`
      <div class="window">
        <menu-bar></menu-bar>
        <tool-ribbon></tool-ribbon>
        <main class="body">
          <slide-panel></slide-panel>
          <slide-canvas></slide-canvas>
          <side-strip></side-strip>
        </main>
        <status-bar></status-bar>
        <span class="meter"><span class="levels"></span></span>
        <water-mark></water-mark>
      </div>
      <span class="tab"></span>`;
  }
}
